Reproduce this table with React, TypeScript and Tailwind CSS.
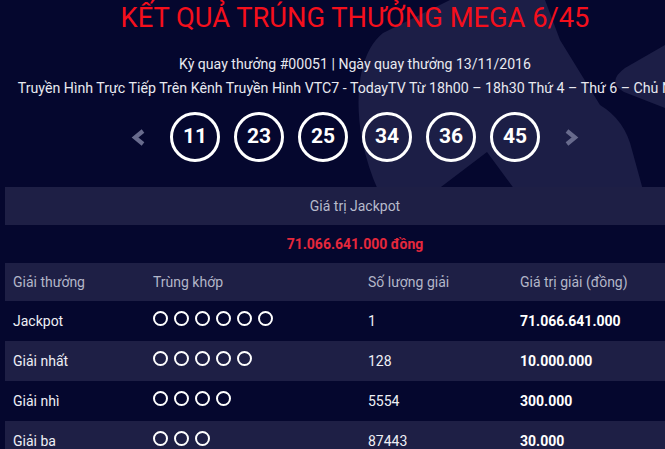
import React from "react";

const balls = [11, 23, 25, 34, 36, 45];

const prizes = [
  { name: "Jackpot", match: 6, count: "1", value: "71.066.641.000" },
  { name: "Giải nhất", match: 5, count: "128", value: "10.000.000" },
  { name: "Giải nhì", match: 4, count: "5554", value: "300.000" },
  { name: "Giải ba", match: 3, count: "87443", value: "30.000" },
];

const Chevron: React.FC<{ dir: "left" | "right" }> = ({ dir }) => (
  <svg width="15" height="17" viewBox="0 0 15 17" className="shrink-0">
    <polyline
      points={dir === "left" ? "12,2 4,8.5 12,15" : "3,2 11,8.5 3,15"}
      fill="none"
      stroke="#686b8d"
      strokeWidth="4.2"
    />
  </svg>
);

const Backdrop: React.FC = () => (
  <svg
    className="absolute left-0 top-0"
    width="665"
    height="190"
    viewBox="0 0 665 190"
  >
    <path
      d="M383 33 Q368 45 362 70 Q355 100 362 140 Q368 168 378 190 L437 190 L487 152 L515 190 L643 190 L632 150 Q625 120 600 105 L560 40 L545 0 L450 0 Z"
      fill="#1c1e46"
    />
    <path d="M665 45 L625 68 Q606 82 624 92 L665 108 Z" fill="#1c1e46" />
  </svg>
);

export default function App() {
  return (
    <div className="relative h-[449px] w-full overflow-hidden bg-[#05072e] font-['Roboto',sans-serif]">
      <Backdrop />
      <div className="relative ml-[5px] w-[700px]">
        <h1 className="text-center text-[27.3px] leading-[36px] text-[#f50f1c]">
          KẾT QUẢ TRÚNG THƯỞNG MEGA 6/45
        </h1>
        <p className="mt-[18px] text-center text-[14.1px] leading-[20px] text-[#e8e9f0]">
          Kỳ quay thưởng #00051 | Ngày quay thưởng 13/11/2016
        </p>
        <p className="mt-[4px] whitespace-nowrap text-center text-[14.2px] leading-[20px] text-[#e8e9f0]">
          Truyền Hình Trực Tiếp Trên Kênh Truyền Hình VTC7 - TodayTV Từ 18h00 – 18h30 Thứ 4 – Thứ 6 – Chủ Nhật
        </p>

        <div className="mt-[14px] flex items-center justify-center">
          <Chevron dir="left" />
          <div className="mx-[24px] flex gap-[14px]">
            {balls.map((b) => (
              <div
                key={b}
                className="flex h-[50px] w-[50px] items-center justify-center rounded-full border-[3px] border-white text-[21px] font-bold text-white"
              >
                {b}
              </div>
            ))}
          </div>
          <Chevron dir="right" />
        </div>

        <div className="mt-[25px] flex h-[38px] items-center justify-center bg-[#1e1f45] text-[14px] text-[#b7bacb]">
          Giá trị Jackpot
        </div>
        <div className="flex h-[38px] items-center justify-center text-[14px] font-bold text-[#e5283c]">
          71.066.641.000 đồng
        </div>

        <div className="grid h-[38px] grid-cols-[140px_215px_152px_1fr] items-center bg-[#1e1f45] text-[14px] text-[#b3b6c8]">
          <div className="pl-2">Giải thưởng</div>
          <div className="pl-2">Trùng khớp</div>
          <div className="pl-2">Số lượng giải</div>
          <div className="pl-2">Giá trị giải (đồng)</div>
        </div>
        {prizes.map((p, i) => (
          <div
            key={p.name}
            className={`grid h-[40px] grid-cols-[140px_215px_152px_1fr] items-center text-[14px] text-[#eeeff5] ${
              i % 2 === 1 ? "bg-[#1e1f45]" : ""
            }`}
          >
            <div className="pl-2">{p.name}</div>
            <div className="flex gap-[6px] pb-[5px] pl-2">
              {Array.from({ length: p.match }).map((_, k) => (
                <span
                  key={k}
                  className="h-[15px] w-[15px] rounded-full border-[2.5px] border-white"
                />
              ))}
            </div>
            <div className="pl-2">{p.count}</div>
            <div className="pl-2 font-bold text-white">{p.value}</div>
          </div>
        ))}
      </div>
    </div>
  );
}
